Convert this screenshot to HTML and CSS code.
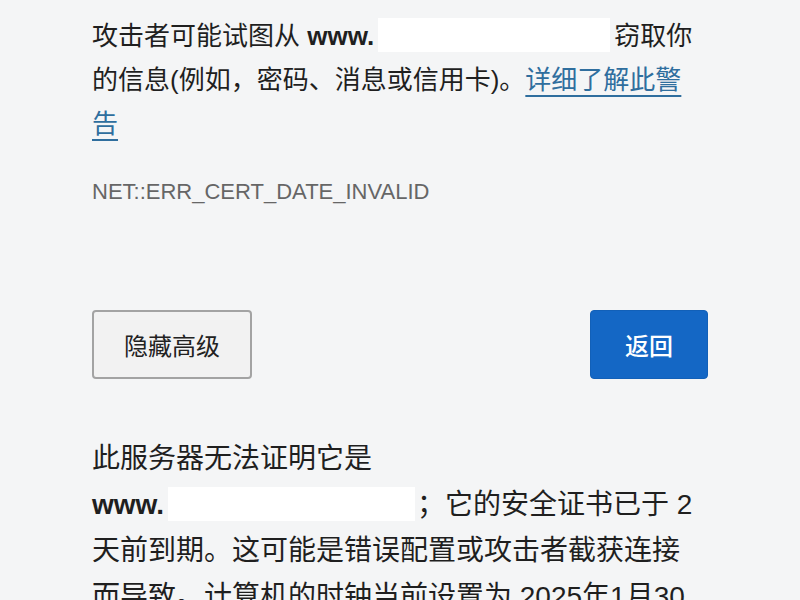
FILE: index.html
```html
<!DOCTYPE html>
<html lang="zh-CN">
<head>
<meta charset="utf-8">
<title>隐私设置错误</title>
<link rel="stylesheet" href="styles.css">
</head>
<body>
<main class="page">
  <p class="intro">攻击者可能试图从 <span class="domain"><b class="www">www.</b><span class="mask mask-top"></span></span>窃取你<br>的信息(例如，密码、消息或信用卡)。<a class="learn" href="#">详细了解此警<br>告</a></p>
  <p class="code">NET::ERR_CERT_DATE_INVALID</p>
  <div class="actions">
    <button class="btn btn-secondary" type="button">隐藏高级</button>
    <button class="btn btn-primary" type="button">返回</button>
  </div>
  <p class="details">此服务器无法证明它是<br><span class="domain"><b class="www">www.</b><span class="mask mask-bottom"></span></span>；它的安全证书已于 2<br>天前到期。这可能是错误配置或攻击者截获连接<br>而导致。计算机的时钟当前设置为 2025年1月30日星期四。这看起来是否正确？如果不正确，则应更正系统时钟，然后刷新此页面。</p>
</main>
</body>
</html>
```

FILE: styles.css
```css
html, body {
  margin: 0;
  padding: 0;
  background: #f4f5f6;
  height: 100%;
  overflow: hidden;
}

body {
  font-family: "Liberation Sans", "Noto Sans CJK SC", sans-serif;
  color: #1f1f1f;
}

.page {
  width: 616px;
  padding: 14px 0 0 92px;
}

.intro {
  margin: 0;
  font-size: 26px;
  line-height: 44px;
}

.domain {
  white-space: nowrap;
}

.www {
  font-weight: bold;
}

.mask {
  display: inline-block;
  background: #ffffff;
  vertical-align: middle;
}

.mask-top {
  width: 232px;
  height: 34px;
  margin: 0 4px;
  position: relative;
  top: -3px;
}

.mask-bottom {
  width: 247px;
  height: 34px;
  margin: 0 2px 0 4px;
  position: relative;
  top: -3px;
}

.learn {
  color: #2f6e9e;
  text-decoration: underline;
  text-decoration-thickness: 2px;
  text-underline-offset: 6px;
}

.code {
  margin: 31px 0 0;
  font-size: 22px;
  line-height: 30px;
  color: #666666;
}

.actions {
  display: flex;
  justify-content: space-between;
  margin-top: 103px;
}

.btn {
  height: 69px;
  font-family: "Liberation Sans", "Noto Sans CJK SC", sans-serif;
  font-size: 24px;
  border-radius: 4px;
  padding: 0;
  cursor: pointer;
}

.btn-secondary {
  width: 160px;
  background: #f2f2f2;
  border: 2px solid #a3a3a3;
  color: #222222;
}

.btn-primary {
  width: 118px;
  background: #1467c5;
  border: 1px solid #1260b8;
  color: #ffffff;
  font-weight: 500;
}

.details {
  margin: 57px 0 0;
  font-size: 28px;
  line-height: 46px;
}
```
